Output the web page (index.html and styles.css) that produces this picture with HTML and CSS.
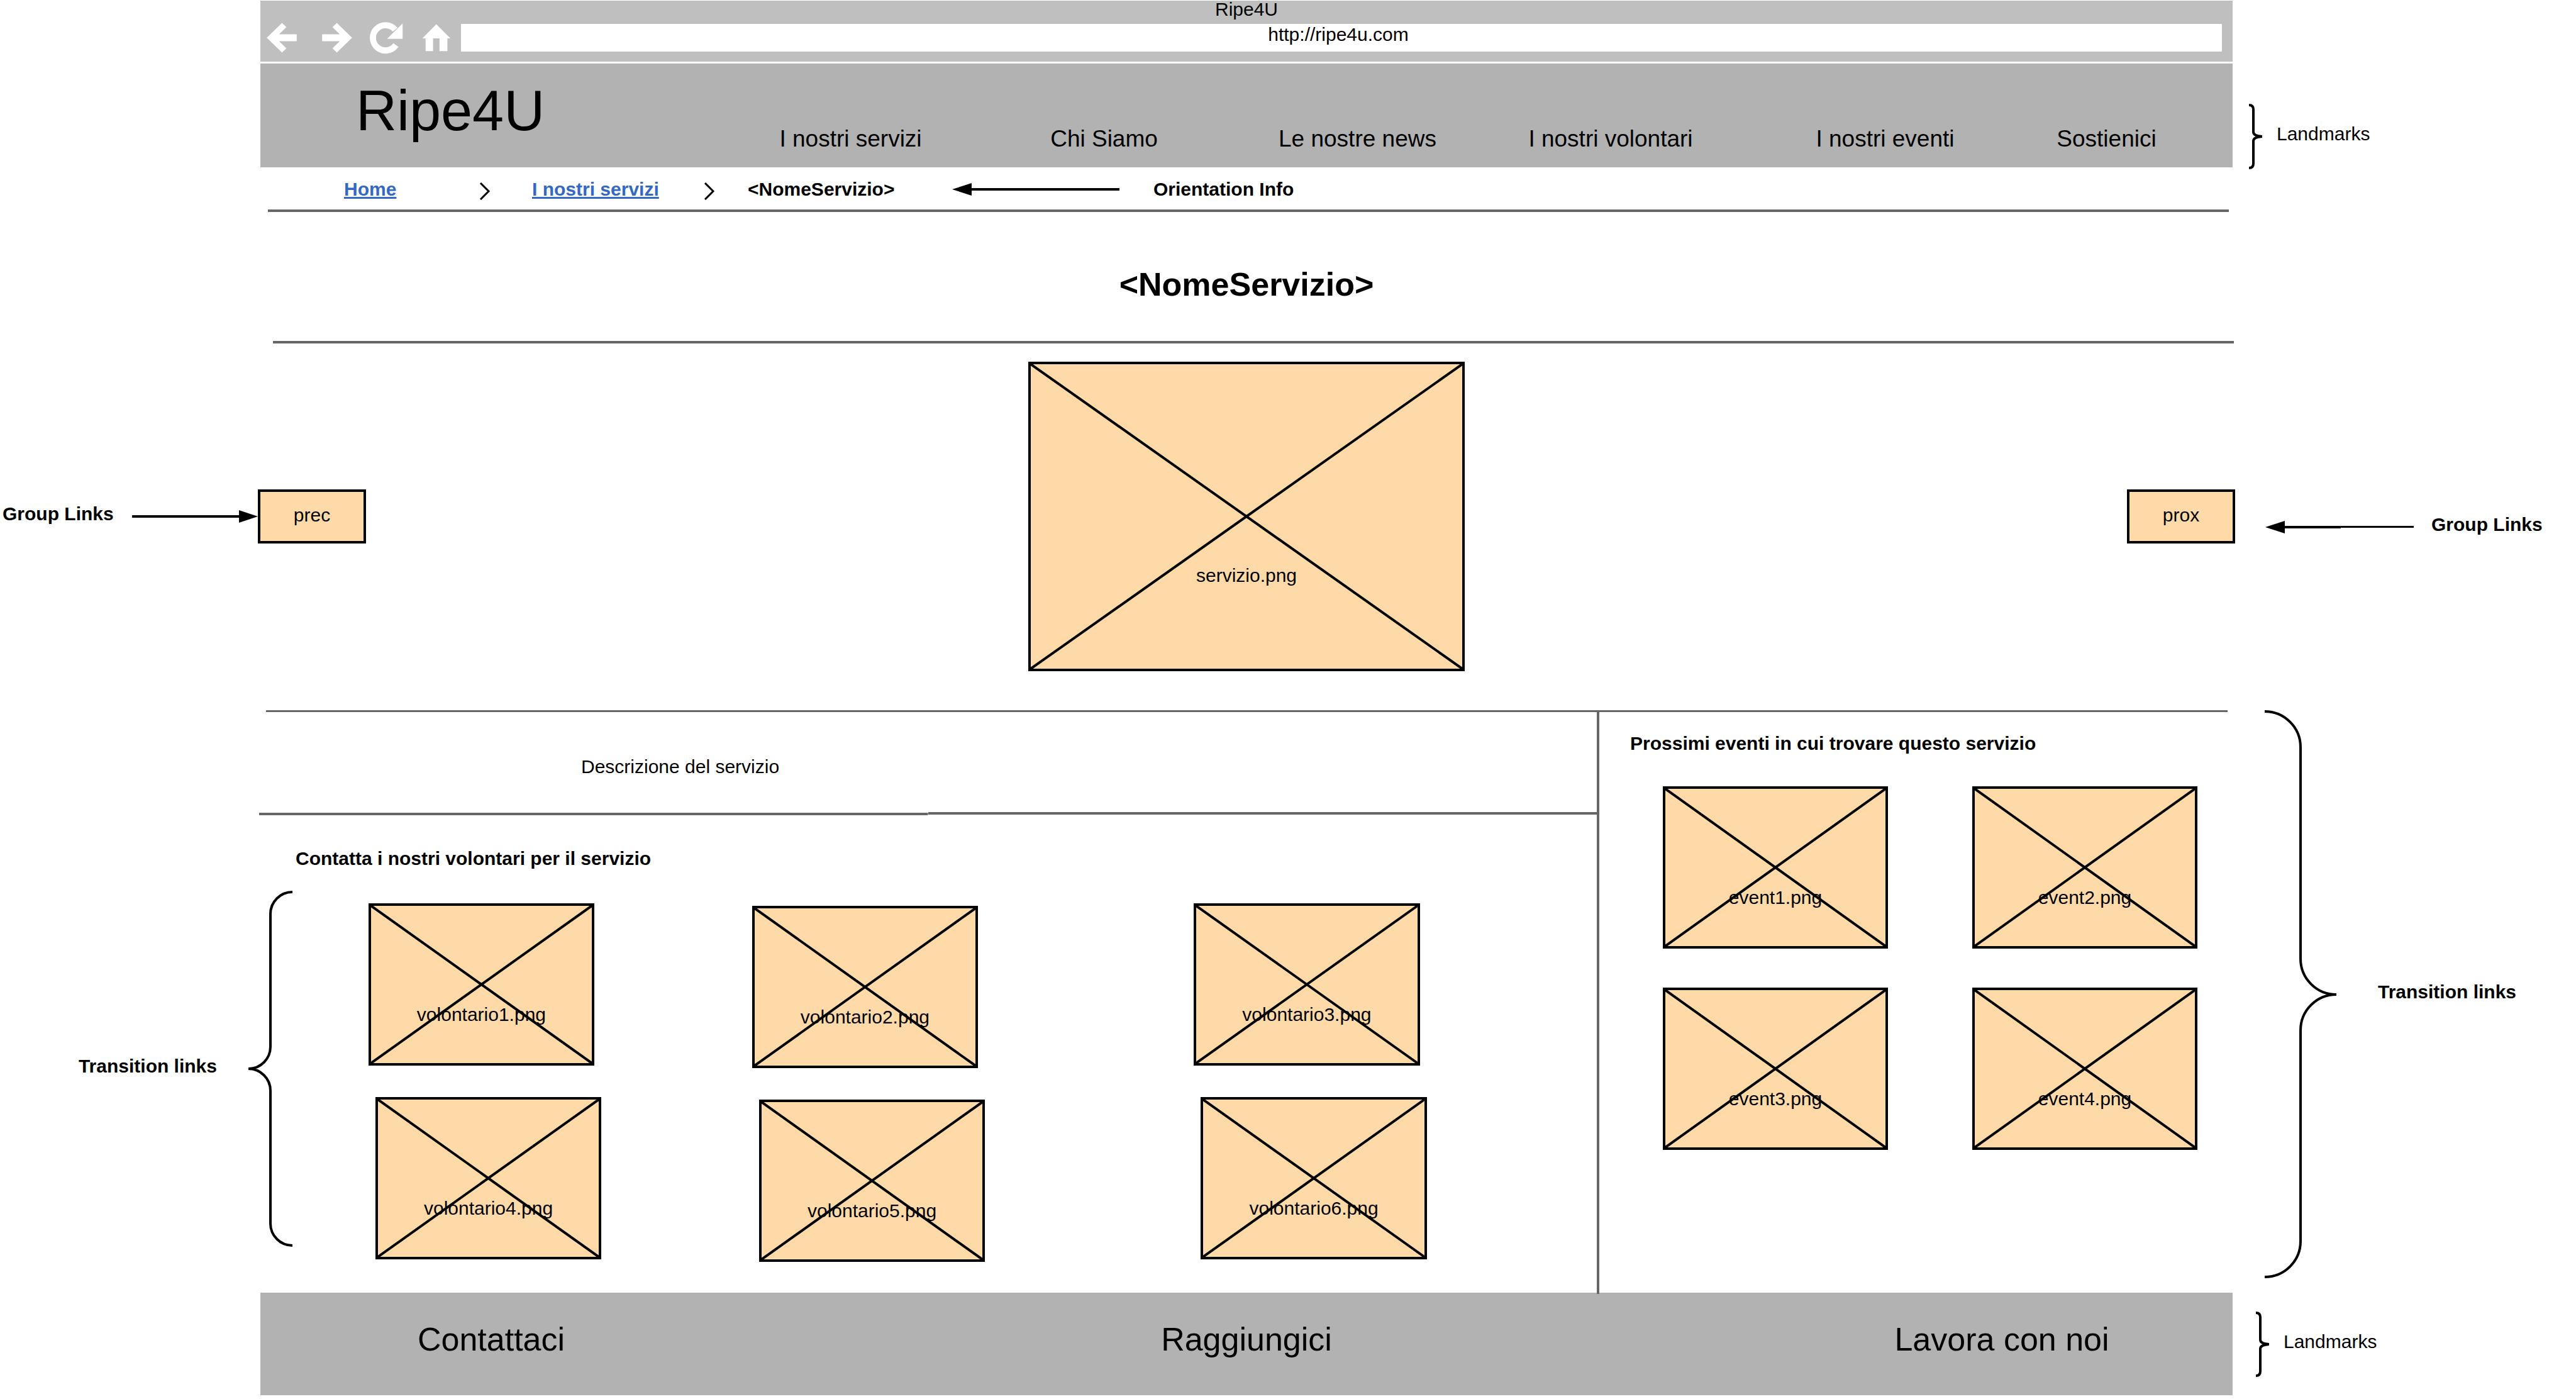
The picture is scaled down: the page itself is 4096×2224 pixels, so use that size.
FILE: index.html
```
<!DOCTYPE html>
<html lang="it">
<head>
<meta charset="utf-8">
<title>Ripe4U</title>
<meta name="viewport" content="width=device-width, initial-scale=1">
<link rel="stylesheet" href="styles.css">
</head>
<body>
<svg class="defs" aria-hidden="true">
  <symbol id="cross" viewBox="0 0 100 100" preserveAspectRatio="none">
    <path class="stroke" vector-effect="non-scaling-stroke" d="M0 0L100 100M100 0L0 100"/>
  </symbol>
  <symbol id="small-brace" viewBox="0 0 21 104">
    <path class="stroke" d="M0 2C5 2 7 5 7 9V45Q7 51 21 52Q7 53 7 59V95C7 99 5 102 0 102"/>
  </symbol>
  <symbol id="chevron" viewBox="0 0 18 28">
    <path class="stroke stroke-thin" d="M2 1L15 14L2 27"/>
  </symbol>
</svg>

<div class="band browser-band">
  <div class="browser">
    <p class="browser-title">Ripe4U</p>
    <div class="browser-row">
      <div class="browser-buttons">
        <button class="icon-button" type="button" aria-label="Indietro">
          <svg viewBox="0 0 58 58"><path d="M2.500 29L29.500 2.700L37.200 10.300L24.200 23H55.500V35H24.200L37.200 47.700L29.500 55.300Z"/></svg>
        </button>
        <button class="icon-button" type="button" aria-label="Avanti">
          <svg viewBox="0 0 58 58"><path d="M55.500 29L28.500 2.700L20.800 10.300L33.800 23H2.500V35H33.800L20.800 47.700L28.500 55.300Z"/></svg>
        </button>
        <button class="icon-button" type="button" aria-label="Ricarica">
          <svg viewBox="0 0 58 58"><path d="M58.200 3.700V31H30.500Z"/><path class="reload-arc" d="M45 14.700A22.400 22.400 0 1 0 46.300 42"/></svg>
        </button>
        <button class="icon-button" type="button" aria-label="Pagina iniziale">
          <svg viewBox="0 0 58 58"><path d="M28.700 5L53.700 30H48.400V52.700H34.400V30H23V52.700H9.700V30H4Z"/></svg>
        </button>
      </div>
      <input class="address" type="text" value="http://ripe4u.com" aria-label="Indirizzo">
    </div>
  </div>
</div>

<header class="band header-band">
  <div class="header">
    <p class="logo">Ripe4U</p>
    <nav class="main-nav" aria-label="Principale">
      <a href="#">I nostri servizi</a>
      <a href="#">Chi Siamo</a>
      <a href="#">Le nostre news</a>
      <a href="#">I nostri volontari</a>
      <a href="#">I nostri eventi</a>
      <a href="#">Sostienici</a>
    </nav>
  </div>
  <div class="note note-header">
    <svg class="small-brace"><use href="#small-brace"/></svg>
    <span class="note-text">Landmarks</span>
  </div>
</header>

<div class="band">
  <div class="page-column">
    <nav class="breadcrumb" aria-label="Percorso">
      <a class="crumb-link" href="#">Home</a>
      <svg class="chevron"><use href="#chevron"/></svg>
      <a class="crumb-link" href="#">I nostri servizi</a>
      <svg class="chevron"><use href="#chevron"/></svg>
      <strong>&lt;NomeServizio&gt;</strong>
      <div class="orientation">
        <svg class="arrow" width="266" height="20" viewBox="0 0 266 20"><path d="M0 10L31 0V20Z"/><path d="M30 8H266V12H30Z"/></svg>
        <strong>Orientation Info</strong>
      </div>
    </nav>
    <hr class="rule rule-breadcrumb">
    <h1 class="page-title">&lt;NomeServizio&gt;</h1>
    <hr class="rule rule-title">
  </div>
</div>

<section class="hero">
  <div class="note note-prev">
    <strong class="note-text">Group Links</strong>
    <svg class="arrow" width="200" height="20" viewBox="0 0 200 20"><path d="M200 10L170 0V20Z"/><path d="M0 8H171V12H0Z"/></svg>
  </div>
  <button class="step-button step-prev" type="button">prec</button>
  <a class="placeholder placeholder-hero" href="#">
    <svg class="cross"><use href="#cross"/></svg><span class="caption">servizio.png</span>
  </a>
  <button class="step-button step-next" type="button">prox</button>
  <div class="note note-next">
    <svg class="arrow" width="236" height="20" viewBox="0 0 236 20"><path d="M0 10L31 0V20Z"/><path d="M30 8H120V12H30Z"/><path d="M120 8H236V11H120Z"/></svg>
    <strong class="note-text">Group Links</strong>
  </div>
</section>

<div class="band">
  <hr class="rule rule-details">
</div>

<main class="band details">
  <div class="note note-volunteers">
    <strong class="note-text">Transition links</strong>
    <svg width="70" height="566" viewBox="0 0 70 566"><path class="stroke" d="M70 2A35 35 0 0 0 35 37V248A35 35 0 0 1 0 283A35 35 0 0 1 35 318V529A35 35 0 0 0 70 564"/></svg>
  </div>
  <div class="columns">
    <div class="service">
      <div class="description"><p>Descrizione del servizio</p></div>
      <hr class="rule-description">
      <section>
        <h2 class="section-title volunteers-title">Contatta i nostri volontari per il servizio</h2>
        <ul class="volunteers">
          <li><a class="placeholder" href="#"><svg class="cross"><use href="#cross"/></svg><span class="caption">volontario1.png</span></a></li>
          <li><a class="placeholder" href="#"><svg class="cross"><use href="#cross"/></svg><span class="caption">volontario2.png</span></a></li>
          <li><a class="placeholder" href="#"><svg class="cross"><use href="#cross"/></svg><span class="caption">volontario3.png</span></a></li>
          <li><a class="placeholder" href="#"><svg class="cross"><use href="#cross"/></svg><span class="caption">volontario4.png</span></a></li>
          <li><a class="placeholder" href="#"><svg class="cross"><use href="#cross"/></svg><span class="caption">volontario5.png</span></a></li>
          <li><a class="placeholder" href="#"><svg class="cross"><use href="#cross"/></svg><span class="caption">volontario6.png</span></a></li>
        </ul>
      </section>
    </div>
    <aside class="events">
      <h2 class="section-title events-title">Prossimi eventi in cui trovare questo servizio</h2>
      <ul class="event-list">
        <li><a class="placeholder" href="#"><svg class="cross"><use href="#cross"/></svg><span class="caption">event1.png</span></a></li>
        <li><a class="placeholder" href="#"><svg class="cross"><use href="#cross"/></svg><span class="caption">event2.png</span></a></li>
        <li><a class="placeholder" href="#"><svg class="cross"><use href="#cross"/></svg><span class="caption">event3.png</span></a></li>
        <li><a class="placeholder" href="#"><svg class="cross"><use href="#cross"/></svg><span class="caption">event4.png</span></a></li>
      </ul>
    </aside>
  </div>
  <div class="note note-events">
    <svg width="114" height="903" viewBox="0 0 114 903"><path class="stroke" d="M0 2A57 57 0 0 1 57 59V395A57 57 0 0 0 114 452A57 57 0 0 0 57 509V844A57 57 0 0 1 0 901"/></svg>
    <strong class="note-text">Transition links</strong>
  </div>
</main>

<footer class="band">
  <nav class="footer" aria-label="Contatti">
    <a href="#">Contattaci</a>
    <a href="#">Raggiungici</a>
    <a href="#">Lavora con noi</a>
  </nav>
  <div class="note note-footer">
    <svg class="small-brace"><use href="#small-brace"/></svg>
    <span class="note-text">Landmarks</span>
  </div>
</footer>
</body>
</html>
```

FILE: styles.css
```
:root {
  --chrome: #bfbfbf;
  --bar: #b2b2b2;
  --box: #ffdaa9;
  --rule: #666;
  --link: #3369c4;
}

* {
  box-sizing: border-box;
}

body {
  margin: 0;
  padding-top: 1px;
  background: #fff;
  color: #000;
  font-family: "Liberation Sans", Arial, sans-serif;
  font-size: 30px;
  line-height: 34px;
  white-space: nowrap;
}

h1,
h2,
p,
ul {
  margin: 0;
  padding: 0;
}

ul {
  list-style: none;
}

a {
  color: inherit;
  text-decoration: none;
}

button,
input {
  margin: 0;
  padding: 0;
  border: 0;
  border-radius: 0;
  color: inherit;
  font: inherit;
}

svg {
  display: block;
  flex: none;
  overflow: visible;
}

.defs {
  position: absolute;
  width: 0;
  height: 0;
}

.stroke {
  fill: none;
  stroke: #000;
  stroke-width: 4px;
}

.stroke-thin {
  stroke-width: 3px;
}

/* Left margin for notes, the page itself, right margin for notes */
.band {
  display: grid;
  grid-template-columns: minmax(0, 414fr) minmax(0, 3136fr) minmax(0, 546fr);
}

.browser,
.header,
.page-column,
.columns,
.footer,
.rule-details {
  grid-column: 2;
}

/* Notes beside the page */
.note {
  display: flex;
  align-items: center;
}

.note-text {
  padding-bottom: 8px;
}

.small-brace {
  width: 21px;
  height: 104px;
}

/* Browser bar */
.browser {
  padding: 0 17px 16px 8px;
  background: var(--chrome);
}

.browser-title {
  padding-left: 9px;
  line-height: 27px;
  text-align: center;
}

.browser-row {
  display: flex;
  align-items: center;
  margin-top: 10px;
}

.browser-buttons {
  display: grid;
  grid-template-columns: 88px 78px 80px 65px;
  grid-template-rows: 44px;
  align-items: center;
}

.icon-button {
  width: 52px;
  height: 52px;
  background: none;
}

.icon-button svg {
  width: 52px;
  height: 52px;
  fill: #fff;
}

.icon-button .reload-arc {
  fill: none;
  stroke: #fff;
  stroke-width: 11px;
}

.address {
  flex: 1;
  min-width: 0;
  height: 44px;
  padding: 0 10px 10px 0;
  background: #fff;
  text-align: center;
}

/* Header */
.header-band {
  margin-top: 3px;
}

.header {
  display: grid;
  grid-template-columns: minmax(0, 585fr) minmax(0, 2315fr);
  align-items: end;
  padding: 25px 84px 23px 152px;
  background: var(--bar);
}

.logo {
  align-self: start;
  font-size: 90px;
  line-height: 100px;
}

.main-nav {
  display: grid;
  grid-template-columns: 403fr 403fr 403fr 402fr 471fr 233fr;
  justify-items: center;
  font-size: 37px;
  line-height: 44px;
}

.note-header {
  gap: 23px;
  padding: 64px 0 0 26px;
  margin-bottom: -3px;
}

/* Breadcrumb and title */
.breadcrumb {
  display: grid;
  grid-template-columns: 215fr 84fr 273fr 70fr 325fr 2036fr;
  align-items: center;
  padding: 18px 0 15px 133px;
}

.crumb-link {
  justify-self: start;
  color: var(--link);
  font-weight: bold;
  text-decoration: underline;
  text-decoration-thickness: 3px;
}

.chevron {
  width: 18px;
  height: 28px;
  margin-top: 6px;
}

.orientation {
  display: flex;
  align-items: center;
  gap: 54px;
}

.rule {
  height: 4px;
  margin: 0;
  border: 0;
  background: var(--rule);
}

.rule-breadcrumb {
  margin: 0 6px 0 12px;
}

.page-title {
  padding: 85px 0 60px;
  font-size: 52px;
  line-height: 60px;
  text-align: center;
}

.rule-title {
  margin: 0 -2px 0 20px;
}

/* Service picture with the previous and next buttons */
.hero {
  display: grid;
  grid-template-columns:
    minmax(0, 410fr) minmax(0, 172fr) minmax(0, 1053fr) minmax(0, 694fr)
    minmax(0, 1053fr) minmax(0, 172fr) minmax(0, 542fr);
  align-items: center;
  padding: 29px 0 62px;
}

.arrow {
  fill: #000;
}

.note-prev {
  justify-content: space-between;
  padding-left: 4px;
}

.note-next {
  gap: 28px;
  padding: 34px 0 0 48px;
}

.step-button {
  height: 86px;
  padding-bottom: 4px;
  border: 4px solid #000;
  background: var(--box);
  text-align: center;
}

.placeholder-hero {
  grid-column: 4;
}

.step-next {
  grid-column: 6;
}

/* Picture placeholder: crossed box with a caption below its centre */
.placeholder {
  display: grid;
  grid-template-rows: 156fr 34px 60fr;
  height: 258px;
  border: 4px solid #000;
  background: var(--box);
  text-align: center;
}

.placeholder-hero {
  grid-template-rows: 319fr 34px 131fr;
  height: 492px;
}

.cross {
  grid-area: 1 / 1 / 4 / 2;
  width: 100%;
  height: 100%;
}

.caption {
  grid-area: 2 / 1 / 3 / 2;
}

/* Details */
.rule-details {
  height: 3px;
  margin: 0 8px 0 9px;
}

.columns {
  display: grid;
  grid-template-columns: minmax(0, 2125fr) minmax(0, 1011fr);
}

.description {
  display: grid;
  grid-template-columns: 510fr 1615fr;
  padding: 70px 0 55px;
}

.description p {
  grid-column: 2;
}

/* The line drops by one pixel over its left half */
.rule-description {
  height: 5px;
  margin: 0 0 0 -2px;
  border: 0;
  background:
    linear-gradient(var(--rule), var(--rule)) left bottom / 50% 4px no-repeat,
    linear-gradient(var(--rule), var(--rule)) right top / 50% 4px no-repeat;
}

.section-title {
  font-size: 30px;
  line-height: 34px;
}

.volunteers-title {
  padding: 52px 0 54px 56px;
}

.volunteers {
  display: grid;
  grid-template-columns: 172fr 370fr 240fr 370fr 332fr 371fr 270fr;
  row-gap: 46px;
  padding-bottom: 49px;
}

.volunteers li {
  width: 97%;
}

.volunteers li:nth-child(3n + 1) {
  grid-column: 2;
}

.volunteers li:nth-child(3n + 2) {
  grid-column: 4;
  margin-top: 4px;
}

.volunteers li:nth-child(3n) {
  grid-column: 6;
}

.volunteers li:nth-child(n + 4) {
  justify-self: end;
}

.events {
  position: relative;
  margin-bottom: -2px;
  border-left: 4px solid var(--rule);
}

.events-title {
  padding: 33px 0 51px 49px;
}

.event-list {
  display: grid;
  grid-template-columns: 101fr 358fr 134fr 358fr 56fr;
  row-gap: 62px;
}

.event-list li:nth-child(odd) {
  grid-column: 2;
}

.event-list li:nth-child(even) {
  grid-column: 4;
}

.note-volunteers {
  align-self: start;
  justify-content: flex-end;
  gap: 50px;
  margin: 284px -51px 0 0;
}

.note-events {
  align-self: start;
  gap: 66px;
  margin-top: -3px;
  padding-left: 51px;
}

/* Footer */
.footer {
  display: grid;
  grid-template-columns: 734fr 1668fr 734fr;
  justify-items: center;
  padding: 44px 0 59px;
  background: var(--bar);
  font-size: 52px;
  line-height: 60px;
}

.note-footer {
  gap: 23px;
  padding-left: 37px;
}
```
